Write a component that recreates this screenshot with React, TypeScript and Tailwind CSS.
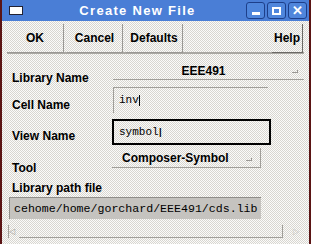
import React from 'react';

const checker =
  'bg-[repeating-conic-gradient(#d8d6d0_0_25%,#fbfbfa_0_50%)] bg-[length:2px_2px]';

const mono = { fontFamily: '"Liberation Mono", "Courier New", monospace' };

function WinButton({ children }: { children: React.ReactNode }) {
  return (
    <div className="w-[19px] h-[17px] rounded-[3px] border border-[#1d3f8a] bg-[#4f86dc] flex items-center justify-center">
      {children}
    </div>
  );
}

export default function App() {
  return (
    <div
      className="w-[311px] h-[244px] overflow-hidden bg-[#5a1414] px-[2px] flex flex-col"
      style={{ fontFamily: '"Liberation Sans", Arial, sans-serif' }}
    >
      {/* title bar */}
      <div className="h-[21px] shrink-0 bg-[#4a7ed6] flex items-center relative">
        <div className="ml-[7px] w-[14px] h-[9px] bg-white border border-[#223]" />
        <div className="absolute left-0 right-0 top-[4px] pr-[36px] text-center text-white font-bold text-[13px] tracking-[1.3px] leading-none">
          Create New File
        </div>
        <div className="ml-auto mr-[2px] flex gap-[2px]">
          <WinButton>
            <div className="w-[8px] h-[3px] bg-white mt-[6px]" />
          </WinButton>
          <WinButton>
            <div className="w-[9px] h-[8px] border-2 border-white" />
          </WinButton>
          <WinButton>
            <span className="text-white font-bold text-[13px] leading-none">✕</span>
          </WinButton>
        </div>
      </div>

      <div className={`flex-1 ${checker} flex flex-col px-[5px]`}>
        {/* button row */}
        <div className="flex pt-[3px] h-[33px] shrink-0 border-b-2 border-[#a9a7a2]">
          <div className="w-[57px] h-[29px] mr-[3px] border-r border-b border-[#9a9894] flex items-center justify-center text-[12px] font-bold">OK</div>
          <div className="w-[56px] h-[29px] mr-[3px] border-r border-b border-[#9a9894] flex items-center justify-center text-[12px] font-bold">Cancel</div>
          <div className="w-[57px] h-[29px] border-r border-b border-[#9a9894] flex items-center justify-center text-[12px] font-bold">Defaults</div>
          <div className="ml-auto w-[31px] h-[29px] mr-[1px] border-r border-b border-[#6b6965] flex items-center justify-center text-[12px] font-bold">Help</div>
        </div>

        {/* Library Name */}
        <div className="flex h-[30px] shrink-0 pl-[5px]">
          <div className="w-[98px] shrink-0 mt-[17px] text-[12px] font-bold leading-[14px]">Library Name</div>
          <div className="mt-[8px] flex-1 ml-[3px] h-[18px] border-b border-[#a09e99] flex items-center relative">
            <span className="flex-1 text-center text-[12px] font-bold mr-[10px]">EEE491</span>
            <span className="absolute right-[6px] top-[8px] w-[6px] h-[3px] border-r border-b border-[#9a9894]" />
          </div>
        </div>

        {/* Cell Name */}
        <div className="flex h-[29px] shrink-0 pl-[5px]">
          <div className="w-[98px] shrink-0 mt-[14px] text-[12px] font-bold leading-[14px]">Cell Name</div>
          <div className="mt-[3px] ml-[3px] w-[155px] h-[26px] border-l border-t border-[#a09e99] flex items-center pl-[5px]">
            <span className="text-[11px]" style={mono}>
              inv<span className="inline-block w-px h-[11px] bg-black align-middle" />
            </span>
          </div>
        </div>

        {/* View Name */}
        <div className="flex h-[32px] shrink-0 pl-[5px]">
          <div className="w-[98px] shrink-0 mt-[16px] text-[12px] font-bold leading-[14px]">View Name</div>
          <div className="mt-[6px] ml-[2px] w-[159px] h-[26px] border-2 border-black flex items-center pl-[5px]">
            <span className="text-[11px]" style={mono}>symbol</span>
            <span className="text-[13px] leading-none">I</span>
          </div>
        </div>

        {/* Tool */}
        <div className="flex h-[28px] shrink-0 pl-[5px]">
          <div className="w-[98px] shrink-0 mt-[16px] text-[12px] font-bold leading-[14px]">Tool</div>
          <div className="mt-[3px] ml-[2px] w-[149px] h-[20px] border-r border-b border-[#a09e99] flex items-center relative">
            <span className="ml-[10px] text-[12px] font-bold">Composer-Symbol</span>
            <span className="absolute right-[8px] top-[10px] w-[6px] h-[3px] border-r border-b border-[#9a9894]" />
          </div>
        </div>

        <div className="pl-[5px] mt-[8px] text-[12px] font-bold leading-[14px]">Library path file</div>

        <div className="mt-[2px] ml-[2px] w-[252px] h-[22px] shrink-0 bg-[#c5c3bf] border-l border-t border-[#8f8d89] flex items-center pl-[4px] overflow-hidden">
          <span className="text-[11.6px] whitespace-nowrap" style={mono}>
            cehome/home/gorchard/EEE491/cds.lib
          </span>
        </div>

        {/* horizontal scrollbar */}
        <div className="mt-[6px] flex items-start">
          <div className="ml-[1px] w-[11px] h-[13px] border-l border-[#a09e99] text-[8px] text-[#a09e99] leading-[13px]">◁</div>
          <div className="w-[266px] h-[13px] border-r border-b border-[#a09e99]" />
          <div className="ml-[10px] w-[11px] h-[13px] text-[8px] text-[#c8c6c1] leading-[13px]">▷</div>
        </div>
      </div>
    </div>
  );
}
